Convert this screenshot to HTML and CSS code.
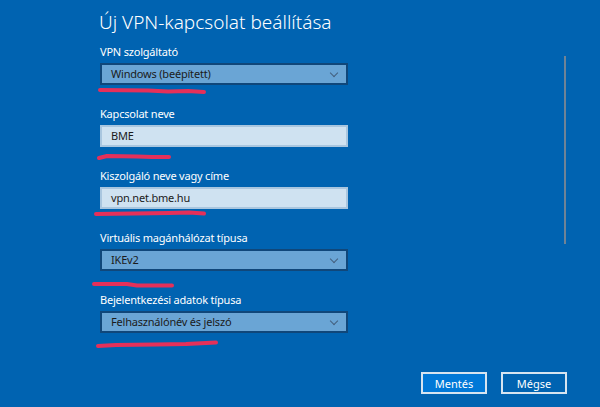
FILE: index.html
```html
<!DOCTYPE html>
<html lang="hu">
<head>
    <meta charset="UTF-8">
    <meta name="viewport" content="width=device-width, initial-scale=1.0">
    <title>Új VPN-kapcsolat beállítása</title>
    <link rel="stylesheet" href="styles.css">
</head>
<body>
    <div class="panel">
        <h1>Új VPN-kapcsolat beállítása</h1>

        <!-- VPN szolgáltató -->
        <div class="field">
            <label>VPN szolgáltató</label>
            <div class="select">Windows (beépített)<span class="chevron"></span></div>
            <svg class="mark mark-1" width="110" height="10" viewBox="0 0 110 10">
                <path d="M2 4 L50 4.5 L70 5.5 L90 5 L106 6" />
            </svg>
        </div>

        <!-- Kapcsolat neve -->
        <div class="field">
            <label>Kapcsolat neve</label>
            <div class="textbox">BME</div>
            <svg class="mark mark-2" width="76" height="10" viewBox="0 0 76 10">
                <path d="M2 6 L10 4 L40 4.5 L55 5 L72 5" />
            </svg>
        </div>

        <!-- Kiszolgáló -->
        <div class="field">
            <label>Kiszolgáló neve vagy címe</label>
            <div class="textbox">vpn.net.bme.hu</div>
            <svg class="mark mark-3" width="114" height="10" viewBox="0 0 114 10">
                <path d="M2 6 L40 5.5 L75 5 L95 4.5 L110 5.5" />
            </svg>
        </div>

        <!-- Virtuális magánhálózat típusa -->
        <div class="field">
            <label>Virtuális magánhálózat típusa</label>
            <div class="select">IKEv2<span class="chevron"></span></div>
            <svg class="mark mark-4" width="84" height="10" viewBox="0 0 84 10">
                <path d="M2 4 L35 4 L45 5.5 L80 5.5" />
            </svg>
        </div>

        <!-- Bejelentkezési adatok típusa -->
        <div class="field">
            <label>Bejelentkezési adatok típusa</label>
            <div class="select">Felhasználónév és jelszó<span class="chevron"></span></div>
            <svg class="mark mark-5" width="124" height="12" viewBox="0 0 124 12">
                <path d="M2 8 L20 7 L60 6.5 L90 6 L120 4.5" />
            </svg>
        </div>
    </div>

    <div class="scrollbar"></div>

    <div class="actions">
        <button type="button" class="primary">Mentés</button>
        <button type="button">Mégse</button>
    </div>
</body>
</html>
```

FILE: styles.css
```css
body {
    margin: 0;
    height: 407px;
    overflow: hidden;
    background-color: #0063b1;
    color: white;
    font-family: "Noto Sans", "Open Sans", Arial, sans-serif;
    position: relative;
}
.panel {
    padding: 10px 0 0 100px;
    width: 248px;
}
h1 {
    margin: 0 0 10px -1px;
    font-size: 19px;
    font-weight: 300;
    line-height: 24px;
}
.field {
    position: relative;
    margin-bottom: 21px;
}
label {
    display: block;
    font-size: 11px;
    letter-spacing: -0.2px;
    line-height: 16px;
    margin-bottom: 3px;
}
.select,
.textbox {
    position: relative;
    box-sizing: border-box;
    height: 22px;
    padding-left: 9px;
    font-size: 11px;
    letter-spacing: -0.2px;
    line-height: 18px;
    color: #1b1b1b;
    border: 2px solid #10477a;
}
.select {
    background-color: #6aa5d5;
}
.textbox {
    background-color: #cfe2f1;
    border-color: #a9c6df;
}
.chevron {
    position: absolute;
    right: 9px;
    top: 5px;
    width: 5px;
    height: 5px;
    border-right: 1px solid #44607e;
    border-bottom: 1px solid #44607e;
    transform: rotate(45deg);
}
.mark {
    position: absolute;
    top: 100%;
}
.mark path {
    fill: none;
    stroke: #e5305a;
    stroke-width: 4;
    stroke-linecap: round;
    stroke-linejoin: round;
}
.mark-1 { left: -2px; margin-top: 1px; }
.mark-2 { left: -3px; margin-top: 5px; }
.mark-3 { left: -6px; margin-top: -1px; }
.mark-4 { left: -8px; margin-top: 9px; }
.mark-5 { left: -4px; margin-top: 5px; }
.scrollbar {
    position: absolute;
    left: 564px;
    top: 56px;
    width: 2px;
    height: 188px;
    background-color: #6f8396;
}
.actions {
    display: flex;
    justify-content: flex-end;
    gap: 14px;
    padding: 18px 33px 0 0;
}
button {
    box-sizing: border-box;
    width: 66px;
    height: 22px;
    padding: 0;
    font-family: inherit;
    font-size: 11px;
    color: white;
    background-color: transparent;
    border: 2px solid #d6e4f0;
}
button.primary {
    background-color: #0078d7;
}
```
